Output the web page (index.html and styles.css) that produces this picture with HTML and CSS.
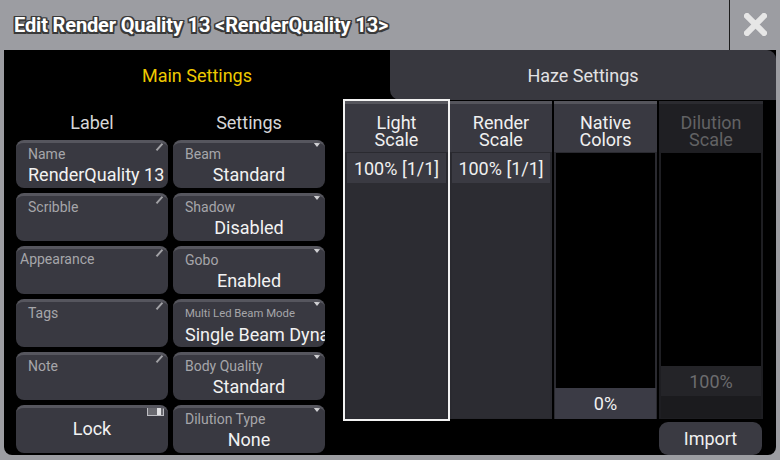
FILE: index.html
```html
<!DOCTYPE html>
<html lang="en">
<head>
<meta charset="utf-8">
<title>Edit Render Quality 13</title>
<link rel="stylesheet" href="styles.css">
</head>
<body>
<div class="window">
  <header class="titlebar">
    <h1 class="title">Edit Render Quality 13 &lt;RenderQuality 13&gt;</h1>
    <button class="close" type="button" aria-label="Close">
      <svg width="23" height="23" viewBox="0 0 23 23"><path d="M3 3L20 20M20 3L3 20" stroke="#e6e6e6" stroke-width="6" stroke-linecap="square" fill="none"/></svg>
    </button>
  </header>

  <main class="panel">
    <nav class="tabs">
      <div class="tab active">Main Settings</div>
      <div class="tab haze">Haze Settings</div>
    </nav>

    <div class="content">
      <section class="form">
        <div class="col-head">Label</div>
        <div class="col-head">Settings</div>

        <div class="field edit"><span class="lbl">Name</span><span class="val">RenderQuality 13</span></div>
        <div class="field select"><span class="lbl">Beam</span><span class="val">Standard</span></div>

        <div class="field edit"><span class="lbl">Scribble</span></div>
        <div class="field select"><span class="lbl">Shadow</span><span class="val">Disabled</span></div>

        <div class="field edit"><span class="lbl lbl-tight">Appearance</span></div>
        <div class="field select"><span class="lbl">Gobo</span><span class="val">Enabled</span></div>

        <div class="field edit"><span class="lbl">Tags</span></div>
        <div class="field select"><span class="lbl lbl-small">Multi Led Beam Mode</span><span class="val">Single Beam Dynamic</span></div>

        <div class="field edit"><span class="lbl">Note</span></div>
        <div class="field select"><span class="lbl">Body Quality</span><span class="val">Standard</span></div>

        <div class="field toggle"><span class="solo">Lock</span></div>
        <div class="field select"><span class="lbl">Dilution Type</span><span class="val">None</span></div>
      </section>

      <section class="scales">
        <div class="scale-grid">
          <div class="scale selected">
            <div class="scale-head">Light<br>Scale</div>
            <div class="scale-body filled">
              <div class="cell">100% [1/1]</div>
            </div>
          </div>
          <div class="scale">
            <div class="scale-head">Render<br>Scale</div>
            <div class="scale-body filled">
              <div class="cell">100% [1/1]</div>
            </div>
          </div>
          <div class="scale">
            <div class="scale-head">Native<br>Colors</div>
            <div class="scale-body empty">
              <div class="cell bottom">0%</div>
            </div>
          </div>
          <div class="scale disabled">
            <div class="scale-head">Dilution<br>Scale</div>
            <div class="scale-body empty">
              <div class="cell">100%</div>
              <div class="cell-rest"></div>
            </div>
          </div>
        </div>
        <div class="actions">
          <button class="btn" type="button">Import</button>
        </div>
      </section>
    </div>
  </main>
</div>
</body>
</html>
```

FILE: styles.css
```css
* {
  box-sizing: border-box;
  margin: 0;
  padding: 0;
}

body {
  margin: 0;
  width: 780px;
  height: 460px;
  overflow: hidden;
  background: #9c9da2;
  font-family: Roboto, "Noto Sans", sans-serif;
}

.window {
  width: 780px;
  height: 460px;
  display: flex;
  flex-direction: column;
  background: #9c9da2;
}

/* ---------- title bar ---------- */
.titlebar {
  height: 50px;
  flex: none;
  display: flex;
}

.title {
  flex: 1;
  padding-left: 14px;
  font-size: 20px;
  font-weight: 700;
  line-height: 50px;
  letter-spacing: -0.15px;
  color: #ffffff;
  white-space: nowrap;
  text-shadow:
    -1.5px -1.5px 0 #3a3a3a, 1.5px -1.5px 0 #3a3a3a,
    -1.5px 1.5px 0 #3a3a3a, 1.5px 1.5px 0 #3a3a3a,
    0 -1.5px 0 #3a3a3a, 0 1.5px 0 #3a3a3a,
    -1.5px 0 0 #3a3a3a, 1.5px 0 0 #3a3a3a;
}

.close {
  width: 51px;
  border: 0;
  border-left: 1px solid #1c1c1c;
  background: transparent;
  display: flex;
  align-items: center;
  justify-content: center;
  padding-bottom: 1px;
}

/* ---------- main panel ---------- */
.panel {
  flex: 1;
  margin: 0 4px 5px;
  background: #000;
  border-radius: 0 0 8px 8px;
  display: flex;
  flex-direction: column;
  overflow: hidden;
}

.tabs {
  height: 50px;
  flex: none;
  display: flex;
}

.tab {
  display: flex;
  align-items: center;
  justify-content: center;
  font-size: 18px;
  color: #e2e2e4;
  padding-top: 1px;
}

.tab.active {
  width: 386px;
  color: #eec900;
}

.tab.haze {
  flex: 1;
  background: #38383f;
  border-radius: 0 9px 0 10px;
}

.content {
  flex: 1;
  display: flex;
  padding-left: 12px;
  gap: 20px;
}

/* ---------- left form ---------- */
.form {
  display: grid;
  grid-template-columns: 152px 152px;
  grid-template-rows: 35px repeat(6, 48px);
  column-gap: 5px;
  row-gap: 5px;
  align-content: start;
}

.col-head {
  padding-top: 13px;
  line-height: 20px;
  font-size: 18px;
  text-align: center;
  color: #d6d6d8;
}

.field {
  position: relative;
  background: #393941;
  border-top: 3px solid #56565e;
  border-radius: 8px;
  overflow: hidden;
  padding: 3px 12px 0;
  color: #f2f2f2;
}

.lbl {
  display: block;
  font-size: 14px;
  line-height: 16px;
  color: #a6a6aa;
  white-space: nowrap;
}

.lbl-tight {
  margin-left: -8px;
  margin-top: -1px;
}

.lbl-small {
  font-size: 11.3px;
  padding-top: 1px;
}

.val {
  display: block;
  margin-top: 3px;
  font-size: 18px;
  line-height: 20px;
  white-space: nowrap;
}

.select .val {
  text-align: center;
}

.solo {
  display: block;
  font-size: 18px;
  line-height: 20px;
  text-align: center;
  padding-top: 8px;
}

/* corner markers */
.edit::after {
  content: "";
  position: absolute;
  top: 0;
  right: 4px;
  width: 9px;
  height: 2px;
  background: #a2a2a6;
  transform: translate(0, 3px) rotate(-48deg);
  transform-origin: center;
}

.select::after {
  content: "";
  position: absolute;
  top: -1px;
  right: 4px;
  border-left: 4.5px solid transparent;
  border-right: 4.5px solid transparent;
  border-top: 5px solid #cfcfd2;
}

.toggle::after {
  content: "";
  position: absolute;
  top: -1px;
  right: 4px;
  width: 15px;
  height: 7px;
  background: linear-gradient(to right, #6a6a70 0 9px, #e2e2e4 9px 13px, #6a6a70 13px);
  border: 1px solid #bdbdc2;
}

/* ---------- right scales ---------- */
.scales {
  display: flex;
  flex-direction: column;
  padding-top: 1px;
}

.scale-grid {
  display: grid;
  grid-template-columns: 103px 102px 103px 104px;
  column-gap: 2px;
  height: 318px;
}

.scale {
  display: flex;
  flex-direction: column;
  background: #2a2a30;
  padding: 0 2px 1px;
}

.scale.selected {
  outline: 2px solid #f2f2f2;
}

.scale-head {
  margin: 0 -2px;
  height: 51px;
  flex: none;
  background: #393941;
  border-top: 3px solid #55555c;
  padding-top: 5px;
  display: flex;
  align-items: center;
  justify-content: center;
  text-align: center;
  font-size: 18px;
  line-height: 17px;
  color: #f0f0f0;
}

.scale-body {
  flex: 1;
  margin-top: 1px;
  display: flex;
  flex-direction: column;
}

.scale-body.filled {
  background: #2c2c32;
}

.scale-body.empty {
  background: #000;
  justify-content: flex-end;
}

.cell {
  height: 30px;
  flex: none;
  display: flex;
  align-items: center;
  justify-content: center;
  background: #3a3a42;
  font-size: 18px;
  color: #f0f0f0;
}

.cell.bottom {
  height: 31px;
  margin: 0 -1px -1px;
  background: #3b3b45;
}

.scale.disabled {
  background: #1e1e22;
}

.scale.disabled .scale-head {
  background: #1f1f23;
  border-top-color: #2b2b30;
  color: #626264;
}

.scale.disabled .cell {
  background: #242428;
  color: #6c6c6e;
}

.cell-rest {
  height: 22px;
  flex: none;
  background: #1b1b1e;
}

.actions {
  display: flex;
  justify-content: flex-end;
  padding-right: 1px;
  margin-top: 3px;
}

.btn {
  width: 103px;
  height: 33px;
  border: 0;
  border-radius: 9px;
  background: #3a3a42;
  color: #f0f0f0;
  font-family: inherit;
  font-size: 18px;
}
```
